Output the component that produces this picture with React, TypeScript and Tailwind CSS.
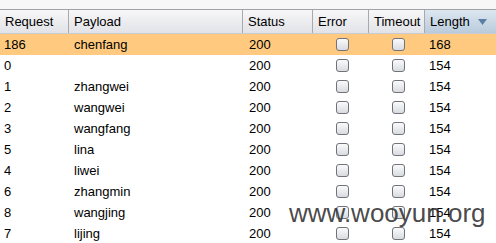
import React from 'react'

const ROWS: [string, string, string, string][] = [
  ['186', 'chenfang', '200', '168'],
  ['0', '', '200', '154'],
  ['1', 'zhangwei', '200', '154'],
  ['2', 'wangwei', '200', '154'],
  ['3', 'wangfang', '200', '154'],
  ['5', 'lina', '200', '154'],
  ['4', 'liwei', '200', '154'],
  ['6', 'zhangmin', '200', '154'],
  ['8', 'wangjing', '200', '154'],
  ['7', 'lijing', '200', '154'],
]

const COLS = 'grid grid-cols-[69px_174px_70px_56px_56px_71px]'

function Checkbox() {
  return (
    <div className="w-[13px] h-[13px] rounded-[3px] border border-[#70737a] bg-gradient-to-b from-[#fbfbfc] to-[#d9dbe0]" />
  )
}

function HeadCell({ label, sorted, last }: { label: string; sorted?: boolean; last?: boolean }) {
  return (
    <div
      className={
        'flex items-center px-[5px] ' +
        (last ? '' : 'border-r border-[#a7a9ae] ') +
        (sorted
          ? 'bg-gradient-to-b from-[#dde7f0] to-[#b9cbdb] justify-between'
          : 'bg-gradient-to-b from-[#f7f7f8] to-[#e2e3e8]')
      }
    >
      <span>{label}</span>
      {sorted && (
        <svg width="9" height="6" viewBox="0 0 9 6" className="mr-[4px]">
          <path d="M0 0h9L4.5 6z" fill="#5a7ea4" />
        </svg>
      )}
    </div>
  )
}

export default function App() {
  return (
    <div className="relative w-[496px] h-[243px] overflow-hidden bg-white text-[13px] text-black font-['Liberation_Sans',Arial,sans-serif]">
      <div className="h-[9px] bg-[#f7f7f7]" />
      <div className={COLS + ' h-[25px] border-t border-b border-t-[#a0a2a8] border-b-[#c9cbd0]'}>
        <HeadCell label="Request" />
        <HeadCell label="Payload" />
        <HeadCell label="Status" />
        <HeadCell label="Error" />
        <HeadCell label="Timeout" />
        <HeadCell label="Length" sorted last />
      </div>
      {ROWS.map((r, i) => (
        <div key={i} className={COLS + ' h-[21px] items-center ' + (i === 0 ? 'bg-[#ffca7f]' : '')}>
          <div className="pl-[4px]">{r[0]}</div>
          <div className="pl-[5px]">{r[1]}</div>
          <div className="pl-[6px]">{r[2]}</div>
          <div className="flex justify-center pl-[3px]"><Checkbox /></div>
          <div className="flex justify-center pl-[3px]"><Checkbox /></div>
          <div className="pl-[4px]">{r[3]}</div>
        </div>
      ))}
      <div className="absolute left-[289px] top-[198px] text-[26px] leading-[30px] text-[#333333]/90 font-['Liberation_Sans',Arial,sans-serif]">
        www.wooyun.org
      </div>
    </div>
  )
}
